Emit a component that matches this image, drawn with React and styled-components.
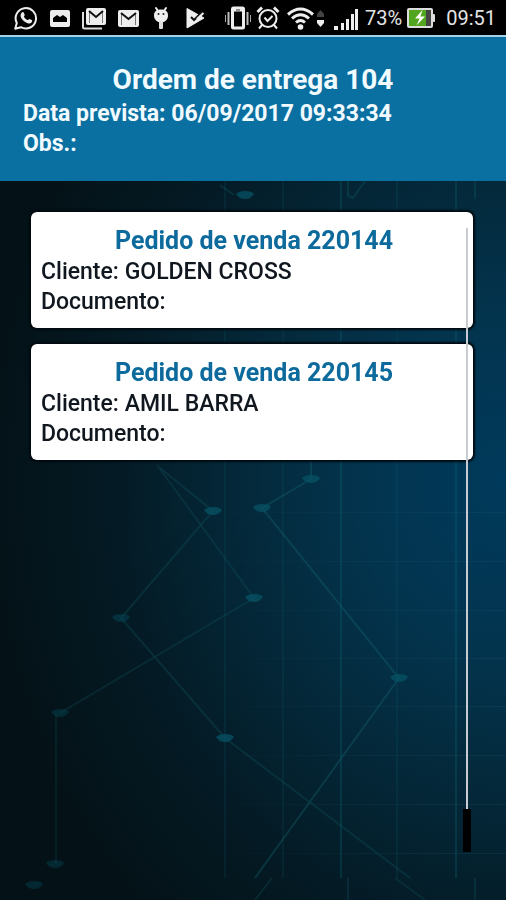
import styled, { createGlobalStyle } from 'styled-components';

const GlobalStyle = createGlobalStyle`
    * {
        box-sizing: border-box;
    }

    body {
        margin: 0;
        background: #04141b;
        font-family: Roboto, 'Liberation Sans', sans-serif;
    }
`;

const Screen = styled.div`
    display: flex;
    flex-direction: column;
    min-height: 100vh;
`;

const StatusBar = styled.div`
    display: flex;
    align-items: center;
    justify-content: space-between;
    height: 37px;
    padding: 0 10px 0 14px;
    background: #000;
    border-bottom: 2px solid #a5d3e6;
    color: #e4e4e4;
    font-size: 20px;
`;

const StatusGroup = styled.div`
    display: flex;
    align-items: center;
    gap: ${({ $gap }) => $gap}px;

    svg {
        display: block;
    }
`;

const Clock = styled.time`
    margin-left: 6px;
`;

const Header = styled.header`
    padding: 26px 23px 22px;
    background: #0a70a2;
    color: #f1fbff;
`;

const HeaderTitle = styled.h1`
    margin: 0 0 3px;
    font-size: 28px;
    font-weight: 700;
    line-height: 33px;
    text-align: center;
`;

const HeaderText = styled.p`
    margin: 0;
    font-size: 23px;
    font-weight: 700;
    line-height: 30px;
`;

const Content = styled.main`
    position: relative;
    flex: 1;
    padding: 31px 33px 48px 31px;
    background: radial-gradient(520px 600px at 100% 42%, #003a5c 0%, #03344e 28%, #042839 52%, #041a24 76%, #041217 100%);
`;

const Circuit = styled.svg`
    position: absolute;
    inset: 0;
    width: 100%;
    height: 100%;
`;

const OrderList = styled.ul`
    position: relative;
    display: flex;
    flex-direction: column;
    gap: 16px;
    margin: 0;
    padding: 0;
    list-style: none;
`;

const Card = styled.li`
    padding: 12px 6px 11px 10px;
    background: #fff;
    border-radius: 6px;
    box-shadow: 0 0 2px 2px #020a10;
    color: #10171f;
`;

const CardTitle = styled.h2`
    margin: 0;
    font-size: 25px;
    font-weight: 700;
    line-height: 33px;
    text-align: center;
    color: #0d6a9c;
`;

const CardText = styled.p`
    margin: 0;
    font-size: 23px;
    font-weight: 500;
    line-height: 30px;
`;

const ScrollTrack = styled.div`
    position: absolute;
    top: 47px;
    right: 35px;
    bottom: 48px;
    display: flex;
    flex-direction: column;
    align-items: center;
    width: 8px;
`;

const ScrollLine = styled.div`
    flex: 1;
    width: 2px;
    background: #c6ccd2;
`;

const ScrollThumb = styled.div`
    width: 8px;
    height: 43px;
    background: #000;
`;

const WhatsappIcon = () => (
    <svg width="24" height="24" viewBox="0 0 24 24" aria-hidden="true">
        <path d="M1.2 22.8 2.8 17A10.2 10.2 0 1 1 6.9 21.2Z" fill="none" stroke="#eee" strokeWidth="2" strokeLinejoin="round" />
        <path
            d="M8.2 6.2c.5-.5 1.2-.4 1.5.2l1 2.3c.2.5-.8 1.4-.8 1.8.8 1.7 2 2.8 3.8 3.6.6 0 1.3-1.4 1.8-1.2l2.3 1.2c.8.4.2 2-.5 2.6-1 .9-2.5.9-4.2.2-3.4-1.3-5.4-3.6-6.4-6.2-.5-1.6.4-3.6 1.5-4.5Z"
            fill="#eee"
        />
    </svg>
);

const PictureIcon = () => (
    <svg width="24" height="24" viewBox="0 0 24 24" aria-hidden="true">
        <rect x="2" y="4" width="20" height="17" rx="2" fill="#eee" />
        <path d="M5 16v-4l4-3 3 2 3-2 4 3v4Z" fill="#000" />
    </svg>
);

const MailIcon = () => (
    <svg width="24" height="24" viewBox="0 0 24 24" aria-hidden="true">
        <rect x="2" y="4" width="21" height="17" rx="2" fill="#eee" />
        <path d="M5.500 19V8M19.500 19V8" stroke="#777" />
        <path d="m5 7 7.500 6L20 7" fill="none" stroke="#111" strokeWidth="2" />
    </svg>
);

const MailStackIcon = () => (
    <svg width="24" height="24" viewBox="0 0 24 24" aria-hidden="true">
        <path d="M1 6v15q0 1.500 1.500 1.500H20" fill="none" stroke="#ddd" strokeWidth="2" />
        <rect x="4" y="2" width="20" height="17" rx="2" fill="#eee" />
        <path d="M7.500 17V6M20.500 17V6" stroke="#777" />
        <path d="m7 5 7 6 7-6" fill="none" stroke="#111" strokeWidth="2" />
    </svg>
);

const DebugIcon = () => (
    <svg width="24" height="24" viewBox="0 0 24 24" aria-hidden="true">
        <path d="M6 2 8 5M16 2 14 5" stroke="#eee" strokeWidth="2" strokeLinecap="round" />
        <path d="M4 9.500C4 6 6 3.500 11 3.500S18 6 18 9.500C18 13.500 15 16.500 11 16.500S4 13.500 4 9.500Z" fill="#eee" />
        <rect x="9" y="15" width="4" height="8" rx="1" fill="#ddd" />
        <circle cx="8.500" cy="8" r="1" fill="#222" />
        <circle cx="13.500" cy="8" r="1" fill="#222" />
    </svg>
);

const PlayCheckIcon = () => (
    <svg width="24" height="24" viewBox="0 0 24 24" aria-hidden="true">
        <path d="M3 2.500 20 12 3 22Z" fill="#eee" stroke="#eee" strokeLinejoin="round" />
        <path d="m7 11 3 3 8-8" fill="none" stroke="#111" strokeWidth="2" />
        <path d="m13 13 6.500-6" fill="none" stroke="#eee" strokeWidth="2" />
    </svg>
);

const VibrateIcon = () => (
    <svg width="28" height="26" viewBox="0 0 28 26" aria-hidden="true">
        <rect x="9.500" y="3" width="11" height="20" rx="1" fill="none" stroke="#eee" strokeWidth="3" />
        <path d="M9 5h12" stroke="#eee" strokeWidth="3" />
        <path d="M13 5h4" stroke="#333" />
        <path d="M5.500 7v13M24.500 7v13" stroke="#bbb" strokeWidth="2" />
        <path d="M2.500 10v7M27.500 10v7" stroke="#aaa" />
    </svg>
);

const AlarmIcon = () => (
    <svg width="26" height="26" viewBox="0 0 26 26" aria-hidden="true">
        <circle cx="12" cy="13.500" r="8.500" fill="none" stroke="#eee" strokeWidth="2" />
        <path d="m8.500 12.500 3 3.500 5-5" fill="none" stroke="#eee" strokeWidth="2" />
        <path d="M1.500 7 6 2.500M18 2.500 22.500 7" stroke="#eee" strokeWidth="3" />
        <path d="m6 20-3 3.500M18 20l3 3.500" stroke="#eee" strokeWidth="2" />
    </svg>
);

const WifiIcon = () => (
    <svg width="41" height="26" viewBox="0 0 41 26" aria-hidden="true">
        <g fill="none" stroke="#eee" strokeWidth="3">
            <path d="M1 9.500Q13.500-1.500 26 9.500" />
            <path d="M5 13.500Q13.500 6 22 13.500" />
            <path d="M9 17.500Q13.500 13.500 18 17.500" />
        </g>
        <circle cx="13.500" cy="22" r="2.800" fill="#eee" />
        <path d="m33.500 5 3.500 4v3h-7V9Z" fill="#444" />
        <path d="M30 15h7v3l-3.500 4-3.500-4Z" fill="#eee" />
    </svg>
);

const SignalIcon = () => (
    <svg width="27" height="26" viewBox="0 0 27 26" aria-hidden="true">
        <path d="M1 21h4v4H1ZM8 18h3v7H8ZM13 14h3v11h-3ZM18 9h3v16h-3ZM22 4h3v21h-3Z" fill="#eee" />
    </svg>
);

const BatteryIcon = () => (
    <svg width="28" height="22" viewBox="0 0 28 22" aria-hidden="true">
        <rect x="24" y="7" width="4" height="8" rx="1" fill="#ddd" />
        <rect x="1" y="2" width="24" height="18" rx="1" fill="#444" stroke="#ddd" strokeWidth="2" />
        <path d="M2 3h17v16H2Z" fill="#52a51e" />
        <path d="M15.500 3 8 11.500h4.500L9.500 18.500 18 9.500h-4.500Z" fill="#fff" />
    </svg>
);

const nodes = [
    [245, 14],
    [311, 298],
    [213, 330],
    [262, 327],
    [254, 417],
    [121, 437],
    [399, 497],
    [60, 532],
    [225, 557],
    [55, 683],
    [34, 704],
];

const gridColumns = [225, 283, 341, 397, 456];
const gridRows = [331, 380, 429, 477, 525, 574, 623, 672];

function CircuitBackground() {
    return (
        <Circuit viewBox="0 0 506 719" preserveAspectRatio="xMidYMid slice" aria-hidden="true">
            <defs>
                <linearGradient id="rowFade" gradientUnits="userSpaceOnUse" x1="180" y1="0" x2="506" y2="0">
                    <stop offset="0" stopColor="#1c6a7a" stopOpacity="0" />
                    <stop offset="1" stopColor="#1c6a7a" stopOpacity="0.2" />
                </linearGradient>
            </defs>
            {gridRows.map((y) => (
                <rect key={y} x="180" y={y} width="326" height="1" fill="url(#rowFade)" />
            ))}
            {gridColumns.map((x) => (
                <path
                    key={x}
                    d={`M${x} 0V697`}
                    stroke="#0b6474"
                    strokeWidth="2"
                    opacity={x === 341 || x === 456 ? 0.3 : 0.15}
                />
            ))}
            <g fill="none" stroke="#15606c" strokeWidth="2" opacity="0.5">
                <path d="M311 279V298L262 327 399 497 255 697" opacity="0.8" />
                <path d="M157 284 254 417 60 532" opacity="0.5" />
                <path d="M160 287 213 330 121 437 225 557 410 697" opacity="0.55" />
                <path d="M56 532V683" opacity="0.35" />
                <path d="M272 697 255 719M395 697l30 22M348 697v22M475 697v22" opacity="0.5" />
                <path d="M348 0v15l5 2 12-17M475 0v18M220 4l14 10" opacity="0.6" />
            </g>
            {nodes.map(([x, y]) => (
                <path
                    key={`${x}-${y}`}
                    d={`M${x - 9} ${y - 1}q3-3 9-3 7 0 9 3-3 5-9 5-6 0-9-5Z`}
                    fill="#075364"
                    opacity={x < 100 ? 0.35 : x < 200 ? 0.4 : 0.75}
                />
            ))}
        </Circuit>
    );
}

const orders = [
    { id: 220144, client: 'GOLDEN CROSS', document: '' },
    { id: 220145, client: 'AMIL BARRA', document: '' },
];

function App() {
    return (
        <>
            <GlobalStyle />
            <Screen>
                <StatusBar>
                    <StatusGroup $gap={10}>
                        <WhatsappIcon />
                        <PictureIcon />
                        <MailStackIcon />
                        <MailIcon />
                        <DebugIcon />
                        <PlayCheckIcon />
                    </StatusGroup>
                    <StatusGroup $gap={5}>
                        <VibrateIcon />
                        <AlarmIcon />
                        <WifiIcon />
                        <SignalIcon />
                        <span>73%</span>
                        <BatteryIcon />
                        <Clock>09:51</Clock>
                    </StatusGroup>
                </StatusBar>
                <Header>
                    <HeaderTitle>Ordem de entrega 104</HeaderTitle>
                    <HeaderText>Data prevista: 06/09/2017 09:33:34</HeaderText>
                    <HeaderText>Obs.:</HeaderText>
                </Header>
                <Content>
                    <CircuitBackground />
                    <OrderList>
                        {orders.map((order) => (
                            <Card key={order.id}>
                                <CardTitle>Pedido de venda {order.id}</CardTitle>
                                <CardText>Cliente: {order.client}</CardText>
                                <CardText>Documento: {order.document}</CardText>
                            </Card>
                        ))}
                    </OrderList>
                    <ScrollTrack>
                        <ScrollLine />
                        <ScrollThumb />
                    </ScrollTrack>
                </Content>
            </Screen>
        </>
    );
}

export default App;
